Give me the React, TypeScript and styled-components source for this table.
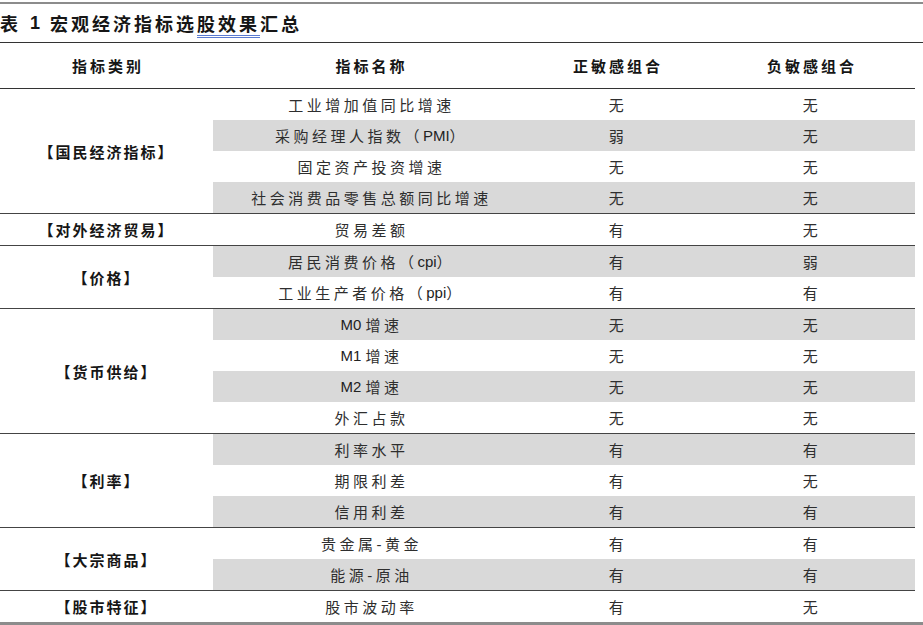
import styled, { createGlobalStyle } from 'styled-components';

const GlobalStyle = createGlobalStyle`
    html, body {
        margin: 0;
        padding: 0;
        background: #ffffff;
    }
    body {
        font-family: "Liberation Sans", "Noto Sans CJK SC", sans-serif;
        color: #333333;
    }
`;

const COLS = '213px 314px 179px 209px';

const Page = styled.div`
    width: 923px;
    padding-top: 2px;
`;
const Rule = styled.div<{ $size: number }>`
    height: ${(props) => props.$size}px;
    background-color: #8c8c8c;
`;
const Title = styled.div`
    height: 38px;
    display: flex;
    align-items: center;
    border-bottom: 1px solid #333333;
    font-family: "Liberation Sans", "Noto Sans CJK SC", sans-serif;
    font-size: 18px;
    font-weight: bold;
    letter-spacing: 3px;
    color: #161616;
    white-space: pre;
`;
const TitleNo = styled.span`
    margin: 0 10px 0 9px;
    letter-spacing: 0;
`;
const Marked = styled.span`
    text-decoration: underline double #5a7ad0;
    text-decoration-thickness: 1px;
    text-underline-offset: 4px;
`;
const HeadRow = styled.div`
    width: 915px;
    height: 45px;
    display: grid;
    grid-template-columns: ${COLS};
    border-bottom: 1px solid #333333;
`;
const HeadCell = styled.div`
    display: flex;
    align-items: center;
    justify-content: center;
    padding-left: 3px;
    font-size: 15px;
    font-weight: bold;
    letter-spacing: 3px;
    color: #161616;
`;
const Group = styled.div<{ $last?: boolean }>`
    width: 915px;
    display: flex;
    border-bottom: ${(props) => (props.$last ? '0' : '1px solid #444444')};
`;
const Category = styled.div`
    width: 213px;
    flex: none;
    display: flex;
    align-items: center;
    justify-content: center;
    font-size: 15px;
    font-weight: bold;
    letter-spacing: 2px;
    color: #161616;
`;
const Rows = styled.div`
    flex: 1;
    display: flex;
    flex-direction: column;
`;
const Row = styled.div<{ $shade: boolean }>`
    height: 31px;
    display: grid;
    grid-template-columns: 314px 179px 209px;
    background-color: ${(props) => (props.$shade ? '#d9d9d9' : 'transparent')};
`;
const Cell = styled.div`
    display: flex;
    align-items: center;
    justify-content: center;
    padding-left: 3px;
    font-size: 15px;
    letter-spacing: 3.5px;
    color: #2e2e2e;
    white-space: pre;
`;
const Latin = styled.span`
    font-size: 15px;
    letter-spacing: 0;
    color: #222222;
`;

type Group = { name: string; rows: [string, string, string][] };

const groups: Group[] = [
    {
        name: '【国民经济指标】',
        rows: [
            ['工业增加值同比增速', '无', '无'],
            ['采购经理人指数（PMI）', '弱', '无'],
            ['固定资产投资增速', '无', '无'],
            ['社会消费品零售总额同比增速', '无', '无'],
        ],
    },
    { name: '【对外经济贸易】', rows: [['贸易差额', '有', '无']] },
    {
        name: '【价格】',
        rows: [
            ['居民消费价格（cpi）', '有', '弱'],
            ['工业生产者价格（ppi）', '有', '有'],
        ],
    },
    {
        name: '【货币供给】',
        rows: [
            ['M0 增速', '无', '无'],
            ['M1 增速', '无', '无'],
            ['M2 增速', '无', '无'],
            ['外汇占款', '无', '无'],
        ],
    },
    {
        name: '【利率】',
        rows: [
            ['利率水平', '有', '有'],
            ['期限利差', '有', '无'],
            ['信用利差', '有', '有'],
        ],
    },
    {
        name: '【大宗商品】',
        rows: [
            ['贵金属-黄金', '有', '有'],
            ['能源-原油', '有', '有'],
        ],
    },
    { name: '【股市特征】', rows: [['股市波动率', '有', '无']] },
];

// split ascii runs so latin letters keep their own font and spacing
const Mixed = ({ text }: { text: string }) => {
    const parts = text.split(/([A-Za-z0-9]+ ?)/).filter(Boolean);
    return (
        <>
            {parts.map((p, i) =>
                /^[A-Za-z0-9]+ ?$/.test(p) ? <Latin key={i}>{p}</Latin> : <span key={i}>{p}</span>
            )}
        </>
    );
};

const App = () => {
    let index = 0;
    return (
        <>
            <GlobalStyle />
            <Page>
                <Rule $size={2} />
                <Title>
                    表<TitleNo>1</TitleNo>宏观经济指标选<Marked>股效果</Marked>汇总
                </Title>
                <HeadRow>
                    <HeadCell>指标类别</HeadCell>
                    <HeadCell>指标名称</HeadCell>
                    <HeadCell>正敏感组合</HeadCell>
                    <HeadCell>负敏感组合</HeadCell>
                </HeadRow>
                {groups.map((g, gi) => (
                    <Group key={g.name} $last={gi === groups.length - 1}>
                        <Category>{g.name}</Category>
                        <Rows>
                            {g.rows.map((r) => {
                                index += 1;
                                return (
                                    <Row key={r[0]} $shade={index % 2 === 0}>
                                        <Cell><Mixed text={r[0]} /></Cell>
                                        <Cell>{r[1]}</Cell>
                                        <Cell>{r[2]}</Cell>
                                    </Row>
                                );
                            })}
                        </Rows>
                    </Group>
                ))}
                <Rule $size={3} />
            </Page>
        </>
    );
};

export default App;
